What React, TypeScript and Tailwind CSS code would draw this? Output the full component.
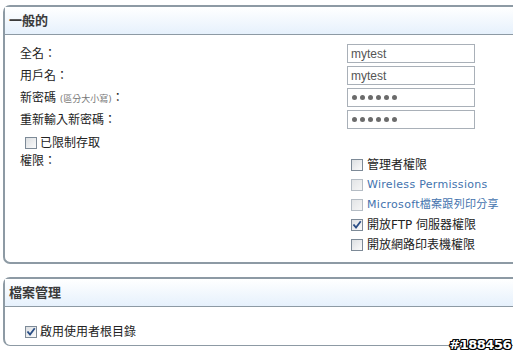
import React from 'react';

const FONT = "font-['DejaVu_Sans','Noto_Sans_CJK_TC',sans-serif]";

const CheckBox = ({ checked = false, disabled = false }: { checked?: boolean; disabled?: boolean }) => (
    <span
        className={`inline-flex items-center justify-center w-[12px] h-[12px] shrink-0 border ${disabled ? 'border-[#b4bcc4] bg-gradient-to-br from-[#e2e4e6] to-[#f6f6f6]' : 'border-[#7d8a97] bg-gradient-to-br from-[#dcdfe2] to-[#fbfbfb]'}`}
    >
        {checked && (
            <svg width="10" height="10" viewBox="0 0 10 10" fill="none">
                <path d="M2 5.2l2 2.3L8.2 2" stroke="#2a4e86" strokeWidth="1.8" strokeLinecap="square" />
            </svg>
        )}
    </span>
);

const Field = ({ value, password = false }: { value: string; password?: boolean }) => (
    <div className="w-[128px] h-[19px] border border-[#a9b0b8] bg-white flex items-center px-[3px]">
        {password ? (
            <div className="flex gap-[3px] pl-[1px]">
                {[0, 1, 2, 3, 4, 5].map(i => (
                    <span key={i} className="w-[5px] h-[5px] rounded-full bg-[#6b6b6b]" />
                ))}
            </div>
        ) : (
            <span className="font-['Liberation_Sans',sans-serif] text-[12px] text-[#555] leading-none">{value}</span>
        )}
    </div>
);

const PanelHeader = ({ title }: { title: string }) => (
    <div className="h-[28px] flex items-center pl-[4px] bg-gradient-to-b from-white to-[#e6f1fc] border-b border-[#8d9aa4]">
        <span className="text-[13px] font-bold text-[#3a3a3a]">{title}</span>
    </div>
);

const FieldRow = ({ label, children }: { label: React.ReactNode; children: React.ReactNode }) => (
    <div className="flex items-center h-[19px] mb-[3px]">
        <div className="w-[327px] text-[12px] text-[#222]">{label}</div>
        {children}
    </div>
);

const perms = [
    { label: '管理者權限', checked: false, blue: false },
    { label: 'Wireless Permissions', checked: false, blue: true },
    { label: 'Microsoft檔案跟列印分享', checked: false, blue: true },
    { label: '開放FTP 伺服器權限', checked: true, blue: false },
    { label: '開放網路印表機權限', checked: false, blue: false },
];

export default function App() {
    return (
        <div className={`relative w-[513px] h-[356px] bg-white overflow-hidden ${FONT}`}>
            <div className="pt-[5px] pl-[3px]">
                {/* general */}
                <div className="h-[259px] border-l-2 border-t-2 border-b-2 border-[#8d9aa4] rounded-l-[7px] bg-white">
                    <PanelHeader title="一般的" />
                    <div className="pt-[9px] pl-[15px]">
                        <FieldRow label="全名：">
                            <Field value="mytest" />
                        </FieldRow>
                        <FieldRow label="用戶名：">
                            <Field value="mytest" />
                        </FieldRow>
                        <FieldRow
                            label={
                                <span>
                                    新密碼 <span className="text-[9px] text-[#777]">(區分大小寫)</span>：
                                </span>
                            }
                        >
                            <Field value="" password />
                        </FieldRow>
                        <FieldRow label="重新輸入新密碼：">
                            <Field value="" password />
                        </FieldRow>
                        <div className="flex items-center gap-[3px] pl-[5px] mt-[6px] h-[15px] text-[12px] text-[#222]">
                            <CheckBox />
                            <span>已限制存取</span>
                        </div>
                        <div className="flex mt-[4px]">
                            <div className="w-[331px] text-[12px] text-[#222] leading-[14px]">權限：</div>
                            <div className="flex flex-col mt-[1px]">
                                {perms.map(p => (
                                    <div key={p.label} className="flex items-center gap-[4px] h-[20px]">
                                        <CheckBox checked={p.checked} disabled={p.blue} />
                                        <span
                                            className={
                                                p.blue
                                                    ? 'text-[11px] text-[#4373ae] whitespace-nowrap tracking-[0.3px]'
                                                    : 'text-[12px] text-[#222] whitespace-nowrap'
                                            }
                                        >
                                            {p.label}
                                        </span>
                                    </div>
                                ))}
                            </div>
                        </div>
                    </div>
                </div>

                {/* file management */}
                <div className="mt-[13px] h-[69px] border-l-2 border-t-2 border-b border-[#8d9aa4] rounded-l-[7px] bg-white">
                    <PanelHeader title="檔案管理" />
                    <div className="flex items-center gap-[3px] pl-[20px] pt-[16px] text-[12px] text-[#222]">
                        <CheckBox checked />
                        <span>啟用使用者根目錄</span>
                    </div>
                </div>
            </div>

            <span className="absolute right-[2px] bottom-[2px] text-[13px] font-bold text-white font-['DejaVu_Sans',sans-serif] tracking-[-0.5px] [text-shadow:1px_0_0_#000,-1px_0_0_#000,0_1px_0_#000,0_-1px_0_#000,1px_1px_0_#000,-1px_-1px_0_#000,1px_-1px_0_#000,-1px_1px_0_#000]">
                #188456
            </span>
        </div>
    );
}
